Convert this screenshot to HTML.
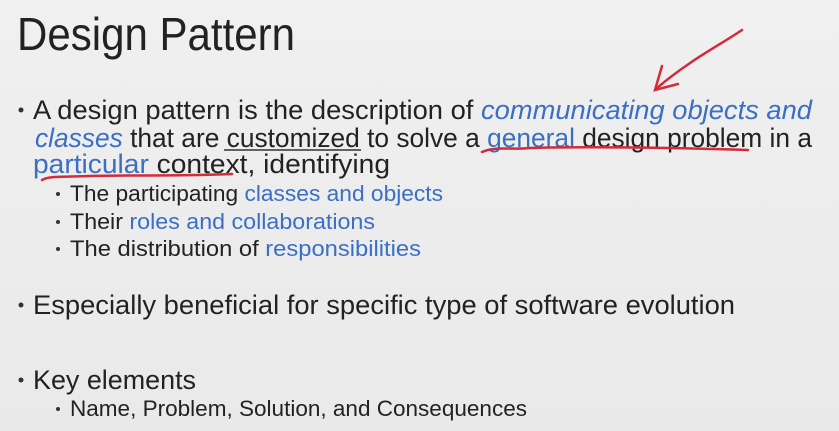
<html><body style="margin:0;background:#efefef;width:839px;height:431px;overflow:hidden">
<svg width="839" height="431" xmlns="http://www.w3.org/2000/svg" style="font-family:'Liberation Sans',sans-serif">
<defs><linearGradient id="g" x1="0" y1="0" x2="0" y2="1"><stop offset="0" stop-color="#f0f0f0"/><stop offset="1" stop-color="#e9e9e9"/></linearGradient></defs>
<rect width="839" height="431" fill="url(#g)"/>
<text x="17" y="50" font-size="46" fill="#222" textLength="278" lengthAdjust="spacingAndGlyphs">Design Pattern</text>
<g font-size="27" fill="#222">
<circle cx="21" cy="110" r="2.5" fill="#333"/>
<text x="33" y="119" textLength="779" lengthAdjust="spacingAndGlyphs">A design pattern is the description of <tspan fill="#3a6fc4" font-style="italic">communicating objects and</tspan></text>
<text x="35" y="147" textLength="777" lengthAdjust="spacingAndGlyphs"><tspan fill="#3a6fc4" font-style="italic">classes</tspan> that are customized to solve a <tspan fill="#3a6fc4">general</tspan> design problem in a</text>
<text x="33" y="173" textLength="357" lengthAdjust="spacingAndGlyphs"><tspan fill="#3a6fc4">particular</tspan> context, identifying</text>
<circle cx="21" cy="305" r="2.5" fill="#333"/>
<text x="33" y="314" textLength="702" lengthAdjust="spacingAndGlyphs">Especially beneficial for specific type of software evolution</text>
<circle cx="21" cy="380" r="2.5" fill="#333"/>
<text x="33" y="389" textLength="163" lengthAdjust="spacingAndGlyphs">Key elements</text>
</g>
<g font-size="22" fill="#222">
<circle cx="58" cy="194" r="2" fill="#333"/>
<text x="70" y="201" textLength="373" lengthAdjust="spacingAndGlyphs">The participating <tspan fill="#3a6fc4">classes and objects</tspan></text>
<circle cx="58" cy="222" r="2" fill="#333"/>
<text x="70" y="229" textLength="305" lengthAdjust="spacingAndGlyphs">Their <tspan fill="#3a6fc4">roles and collaborations</tspan></text>
<circle cx="58" cy="249" r="2" fill="#333"/>
<text x="70" y="256" textLength="351" lengthAdjust="spacingAndGlyphs">The distribution of <tspan fill="#3a6fc4">responsibilities</tspan></text>
<circle cx="58" cy="409" r="2" fill="#333"/>
<text x="70" y="416" textLength="457" lengthAdjust="spacingAndGlyphs">Name, Problem, Solution, and Consequences</text>
</g>
<line x1="224" y1="150" x2="361" y2="150" stroke="#333" stroke-width="1.5"/>
<g fill="none" stroke="#d42a3a" stroke-width="2.5" stroke-linecap="round">
<path d="M742 30 C720 45 690 60 657 88"/>
<path d="M662 66 L655 90 L678 84"/>
<path d="M482 152 C495 146 510 150 530 148 C600 146 680 148 748 150"/>
<path d="M42 180 C48 176 60 177 90 176 C140 175 190 176 232 174"/>
</g>
</svg>
</body></html>
